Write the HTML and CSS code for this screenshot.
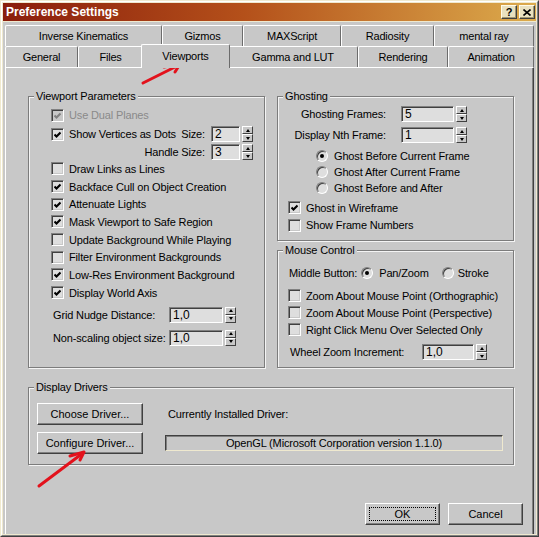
FILE: index.html
```html
<!DOCTYPE html>
<html lang="en">
<head>
    <meta charset="UTF-8">
    <title>Preference Settings</title>
    <link rel="stylesheet" href="styles.css">
</head>
<body>
<div class="window">
    <div class="frame">
        <div class="titlebar">
            <span class="title">Preference Settings</span>
            <div class="caption-btns">
                <span class="cap-btn">?</span>
                <span class="cap-btn">
                    <svg width="8" height="7" viewBox="0 0 8 7"><path d="M0.5 0.5 L7.5 6.5 M7.5 0.5 L0.5 6.5" stroke="#000" stroke-width="1.6"/></svg>
                </span>
            </div>
        </div>

        <div class="client">
            <!-- two rows of tabs, the front row holds the selected one -->
            <div class="tabs">
                <div class="tab-row back">
                    <div class="tab">Inverse Kinematics</div>
                    <div class="tab">Gizmos</div>
                    <div class="tab">MAXScript</div>
                    <div class="tab">Radiosity</div>
                    <div class="tab">mental ray</div>
                </div>
                <div class="tab-row front">
                    <div class="tab">General</div>
                    <div class="tab">Files</div>
                    <div class="tab active">Viewports</div>
                    <div class="tab">Gamma and LUT</div>
                    <div class="tab">Rendering</div>
                    <div class="tab">Animation</div>
                </div>
            </div>

            <div class="panel">
                <div class="panel-grid">

                    <div class="group vp">
                        <div class="group-title">Viewport Parameters</div>
                        <div class="vp-rows">
                            <div class="row h18 disabled">
                                <span class="cb"><svg viewBox="0 0 7 7"><polyline points="0.5,3.5 2.5,5.5 6.5,1.5"/></svg></span>Use Dual Planes
                            </div>
                            <div class="row h20">
                                <span class="cb"><svg viewBox="0 0 7 7"><polyline points="0.5,3.5 2.5,5.5 6.5,1.5"/></svg></span>Show Vertices as Dots
                                <div class="spin push">
                                    <span class="spin-label">Size:</span>
                                    <span class="field w29">2</span>
                                    <span class="arrows"><span class="up"></span><span class="down"></span></span>
                                </div>
                            </div>
                            <div class="row h16">
                                <div class="spin push">
                                    <span class="spin-label">Handle Size:</span>
                                    <span class="field w29">3</span>
                                    <span class="arrows"><span class="up"></span><span class="down"></span></span>
                                </div>
                            </div>
                            <div class="row"><span class="cb off"></span>Draw Links as Lines</div>
                            <div class="row"><span class="cb"><svg viewBox="0 0 7 7"><polyline points="0.5,3.5 2.5,5.5 6.5,1.5"/></svg></span>Backface Cull on Object Creation</div>
                            <div class="row"><span class="cb"><svg viewBox="0 0 7 7"><polyline points="0.5,3.5 2.5,5.5 6.5,1.5"/></svg></span>Attenuate Lights</div>
                            <div class="row"><span class="cb"><svg viewBox="0 0 7 7"><polyline points="0.5,3.5 2.5,5.5 6.5,1.5"/></svg></span>Mask Viewport to Safe Region</div>
                            <div class="row"><span class="cb off"></span>Update Background While Playing</div>
                            <div class="row"><span class="cb off"></span>Filter Environment Backgrounds</div>
                            <div class="row"><span class="cb"><svg viewBox="0 0 7 7"><polyline points="0.5,3.5 2.5,5.5 6.5,1.5"/></svg></span>Low-Res Environment Background</div>
                            <div class="row"><span class="cb"><svg viewBox="0 0 7 7"><polyline points="0.5,3.5 2.5,5.5 6.5,1.5"/></svg></span>Display World Axis</div>
                            <div class="val-row">
                                <span>Grid Nudge Distance:</span>
                                <span class="field">1,0</span>
                                <span class="arrows"><span class="up"></span><span class="down"></span></span>
                            </div>
                            <div class="val-row">
                                <span>Non-scaling object size:</span>
                                <span class="field">1,0</span>
                                <span class="arrows"><span class="up"></span><span class="down"></span></span>
                            </div>
                        </div>
                    </div>

                    <div class="right-col">
                        <div class="group ghost">
                            <div class="group-title">Ghosting</div>
                            <div class="gv-row first">
                                <span class="gv-label">Ghosting Frames:</span>
                                <span class="field">5</span>
                                <span class="arrows"><span class="up"></span><span class="down"></span></span>
                            </div>
                            <div class="gv-row">
                                <span class="gv-label">Display Nth Frame:</span>
                                <span class="field">1</span>
                                <span class="arrows"><span class="up"></span><span class="down"></span></span>
                            </div>
                            <div class="radio-list">
                                <div class="rrow"><span class="rb on"></span>Ghost Before Current Frame</div>
                                <div class="rrow"><span class="rb"></span>Ghost After Current Frame</div>
                                <div class="rrow"><span class="rb"></span>Ghost Before and After</div>
                            </div>
                            <div class="ghost-checks">
                                <div class="row h175"><span class="cb"><svg viewBox="0 0 7 7"><polyline points="0.5,3.5 2.5,5.5 6.5,1.5"/></svg></span>Ghost in Wireframe</div>
                                <div class="row h175"><span class="cb off"></span>Show Frame Numbers</div>
                            </div>
                        </div>

                        <div class="group mouse">
                            <div class="group-title">Mouse Control</div>
                            <div class="mid-row">
                                Middle Button:<span class="rb on first"></span>Pan/Zoom<span class="rb second"></span>Stroke
                            </div>
                            <div class="mouse-checks">
                                <div class="row h17"><span class="cb off"></span>Zoom About Mouse Point (Orthographic)</div>
                                <div class="row h17"><span class="cb off"></span>Zoom About Mouse Point (Perspective)</div>
                                <div class="row h17"><span class="cb off"></span>Right Click Menu Over Selected Only</div>
                            </div>
                            <div class="wheel-row">
                                <span>Wheel Zoom Increment:</span>
                                <span class="field">1,0</span>
                                <span class="arrows"><span class="up"></span><span class="down"></span></span>
                            </div>
                        </div>
                    </div>

                    <div class="group drivers">
                        <div class="group-title">Display Drivers</div>
                        <div class="drv-grid">
                            <button class="btn">Choose Driver...</button>
                            <span class="drv-label">Currently Installed Driver:</span>
                            <button class="btn">Configure Driver...</button>
                            <span class="drv-field">OpenGL (Microsoft Corporation version 1.1.0)</span>
                        </div>
                    </div>

                </div>

                <div class="dlg-buttons">
                    <button class="btn dlg default">OK</button>
                    <button class="btn dlg">Cancel</button>
                </div>
            </div>
        </div>
    </div>

    <!-- red marker arrows drawn on top of the dialog -->
    <svg class="marks" width="539" height="537" viewBox="0 0 539 537">
        <g fill="none" stroke="#e3121c" stroke-width="3" stroke-linecap="round" stroke-linejoin="round">
            <path d="M143 83 L179 65"/>
            <path d="M164 67 L180 64 L175 72"/>
            <path d="M39 486 L83 453"/>
            <path d="M70 456 L84 452 L80 460"/>
        </g>
    </svg>
</div>
</body>
</html>
```

FILE: styles.css
```css
* {
    box-sizing: border-box;
}

body {
    margin: 0;
    font-family: "Liberation Sans", Arial, sans-serif;
    font-size: 11px;
    letter-spacing: -0.15px;
    color: #000;
    background: #c8c8c8;
}

/* window frame */
.window {
    position: relative;
    width: 539px;
    height: 537px;
    border: 1px solid;
    border-color: #efe9cf #404040 #404040 #efe9cf;
}

.frame {
    height: 100%;
    display: flex;
    flex-direction: column;
    padding: 1px;
    border: 1px solid;
    border-color: #fff #808080 #808080 #fff;
    background: #efe9cf;
}

.titlebar {
    height: 18px;
    display: flex;
    align-items: center;
    padding: 0 1px 0 3px;
    background: linear-gradient(to right, #8a1d0c, #b4501a 45%, #dcab4c);
}

.title {
    color: #fff;
    font-weight: bold;
    font-size: 12px;
    letter-spacing: 0;
}

.caption-btns {
    margin-left: auto;
    display: flex;
    gap: 2px;
}

.cap-btn {
    width: 16px;
    height: 14px;
    display: flex;
    align-items: center;
    justify-content: center;
    border: 1px solid;
    border-color: #fffbe8 #404040 #404040 #fffbe8;
    box-shadow: inset -1px -1px #a09874;
    background: #e9e1c0;
    font-weight: bold;
    font-size: 11px;
    line-height: 1;
}

.client {
    flex: 1;
    margin-top: 1px;
    display: flex;
    flex-direction: column;
    padding: 3px 2px 0;
    background: #c8c8c8;
}

/* tabs */
.tabs {
    height: 42px;
    display: flex;
    flex-direction: column;
}

.tab-row {
    height: 21px;
    display: grid;
}

.tab-row.back {
    grid-template-columns: 157px 81px 98px 93px 1fr;
}

.tab-row.front {
    grid-template-columns: 73px 65px 85px 130px 90px 1fr;
}

.tab {
    display: flex;
    align-items: center;
    justify-content: center;
    border: 1px solid;
    border-bottom: 0;
    border-color: #fff #6c6c6c #fff #fff;
    border-radius: 2px 2px 0 0;
    background: #c8c8c8;
    letter-spacing: -0.2px;
}

.tab.active {
    position: relative;
    z-index: 2;
    margin: -2px -2px -1px;
    padding-bottom: 2px;
}

/* tab page: its lower edge runs off under the dialog buttons */
.panel {
    flex: 1;
    display: flex;
    flex-direction: column;
    padding: 28px 0 0 22px;
    border: 1px solid;
    border-bottom: 0;
    border-color: #fff #404040 #404040 #fff;
    box-shadow: inset -1px 0 #808080;
}

.panel-grid {
    width: 486px;
    display: grid;
    grid-template-columns: 237px 237px;
    column-gap: 12px;
    row-gap: 19px;
}

.right-col {
    display: flex;
    flex-direction: column;
    gap: 9px;
}

/* etched group boxes */
.group {
    border: 1px solid #7c7c7c;
    box-shadow: 1px 1px 0 #f4f4f4, inset 1px 1px 0 #f4f4f4;
}

.group-title {
    display: table;
    margin: -8px 0 0 5px;
    padding: 0 2px;
    line-height: 14px;
    background: #c8c8c8;
}

.ghost {
    height: 145px;
}

.mouse {
    height: 118px;
}

.drivers {
    grid-column: 1 / 3;
    height: 78px;
}

/* rows */
.vp-rows {
    margin-top: 3px;
    padding: 0 11px 0 22px;
}

.row {
    display: flex;
    align-items: center;
    height: 17.7px;
    white-space: nowrap;
}

.row.h16 { height: 16px; }
.row.h17 { height: 17px; }
.row.h175 { height: 17.5px; }
.row.h18 { height: 18px; }
.row.h20 { height: 20px; }

.row.disabled {
    color: #8a8a8a;
}

.row.h16 {
    justify-content: flex-end;
}

.spin {
    display: flex;
    align-items: center;
}

.spin.push {
    margin-left: auto;
}

.spin-label {
    margin-right: 6px;
}

.val-row {
    display: grid;
    grid-template-columns: 116px 54px 13px;
    align-items: center;
    height: 20px;
    margin-top: 3px;
    padding-left: 2px;
}

/* checkbox */
.cb {
    flex: none;
    width: 13px;
    height: 13px;
    margin-right: 5px;
    display: flex;
    align-items: center;
    justify-content: center;
    border: 1px solid;
    border-color: #808080 #fff #fff #808080;
    box-shadow: inset 1px 1px #404040, inset -1px -1px #c8c8c8;
    background: #dedede;
}

.cb svg {
    width: 7px;
    height: 7px;
    fill: none;
    stroke: #000;
    stroke-width: 2.1;
}

.disabled .cb {
    background: #c8c8c8;
}

.disabled .cb svg {
    stroke: #808080;
}

/* radio button */
.rb {
    flex: none;
    position: relative;
    width: 12px;
    height: 12px;
    margin-right: 6px;
    border-radius: 50%;
    border: 1px solid;
    border-color: #808080 #fff #fff #808080;
    box-shadow: inset 1px 1px #404040;
    background: #dedede;
}

.rb.on::after {
    content: "";
    position: absolute;
    left: 3px;
    top: 3px;
    width: 4px;
    height: 4px;
    border-radius: 50%;
    background: #000;
}

/* spinner edit + arrows */
.field {
    height: 16px;
    padding-left: 3px;
    line-height: 14px;
    font-size: 12px;
    border: 1px solid;
    border-color: #808080 #fff #fff #808080;
    box-shadow: inset 1px 1px #404040;
    background: #dedede;
    letter-spacing: 0;
}

.field.w29 {
    width: 29px;
}

.arrows {
    width: 11px;
    height: 16px;
    margin-left: 2px;
    display: flex;
    flex-direction: column;
}

.arrows span {
    flex: 1;
    display: flex;
    align-items: center;
    justify-content: center;
    border: 1px solid;
    border-color: #fff #404040 #404040 #fff;
    background: #c8c8c8;
}

.arrows .up::after,
.arrows .down::after {
    content: "";
    border-left: 2px solid transparent;
    border-right: 2px solid transparent;
}

.arrows .up::after {
    border-bottom: 3px solid #000;
}

.arrows .down::after {
    border-top: 3px solid #000;
}

/* ghosting */
.gv-row {
    display: grid;
    grid-template-columns: 123px 53px 13px;
    align-items: center;
    height: 18px;
    margin-top: 3px;
}

.gv-row.first {
    margin-top: 2px;
}

.gv-label {
    text-align: right;
    padding-right: 15px;
}

.radio-list {
    margin-top: 4px;
    padding-left: 38px;
}

.rrow {
    display: flex;
    align-items: center;
    height: 16px;
}

.ghost-checks {
    margin-top: 3px;
    padding-left: 10px;
}

/* mouse control */
.mid-row {
    display: flex;
    align-items: center;
    height: 18px;
    margin-top: 7px;
    padding-left: 11px;
}

.rb.first {
    margin-left: 4px;
}

.rb.second {
    margin-left: 13px;
    margin-right: 4px;
}

.mouse-checks {
    margin-top: 5px;
    padding-left: 10px;
}

.wheel-row {
    display: grid;
    grid-template-columns: 132px 52px 13px;
    align-items: center;
    height: 18px;
    margin-top: 5px;
    padding-left: 12px;
}

/* display drivers */
.drv-grid {
    display: grid;
    grid-template-columns: 106px 1fr;
    grid-template-rows: 22px 22px;
    column-gap: 22px;
    row-gap: 7px;
    align-items: center;
    margin-top: 9px;
    padding: 0 10px 0 8px;
}

.drv-label {
    padding-left: 3px;
}

.drv-field {
    height: 16px;
    line-height: 14px;
    text-align: center;
    border: 1px solid;
    border-color: #404040 #efe9cf #efe9cf #404040;
    box-shadow: inset 1px 1px #808080;
    background: #c8c8c8;
}

/* push buttons */
.btn {
    height: 22px;
    padding: 0;
    font: inherit;
    color: #000;
    border: 1px solid;
    border-color: #fff #404040 #404040 #fff;
    box-shadow: inset -1px -1px #808080;
    background: #c8c8c8;
}

.dlg-buttons {
    display: flex;
    justify-content: flex-end;
    gap: 8px;
    margin-top: 38px;
    padding-right: 10px;
}

.btn.dlg {
    width: 75px;
}

.btn.default {
    outline: 1px dotted #000;
    outline-offset: -5px;
}

.marks {
    position: absolute;
    left: -1px;
    top: -1px;
    pointer-events: none;
}
```
